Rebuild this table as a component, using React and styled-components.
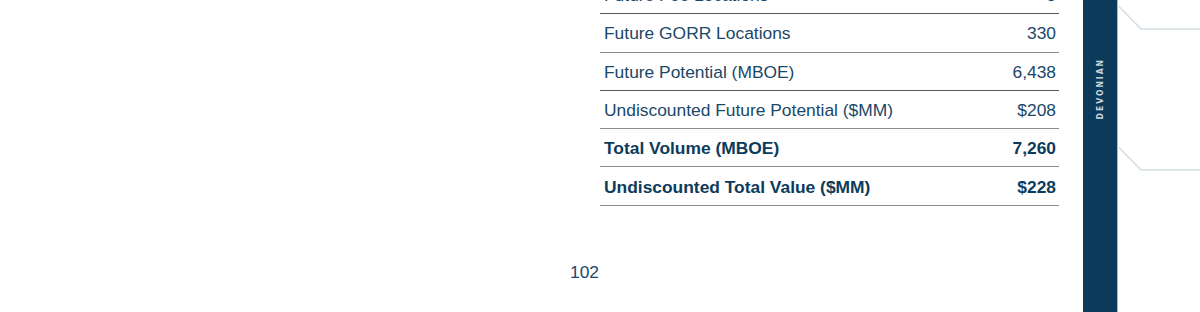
import React from "react";
import styled, { createGlobalStyle } from "styled-components";

const Global = createGlobalStyle`
  html, body { margin: 0; padding: 0; background: #ffffff; }
  body { font-family: "Liberation Sans", Arial, sans-serif; }
`;

const Page = styled.div`
  width: 1200px;
  height: 312px;
  display: flex;
  overflow: hidden;
  background: #ffffff;
`;

const Main = styled.div`
  flex: none;
  width: 1083px;
  box-sizing: border-box;
  display: flex;
  flex-direction: column;
  align-items: flex-start;
  padding-left: 570px;
`;

const Table = styled.div`
  width: 459px;
  margin-top: -24px;
  margin-left: 30px;
  display: flex;
  flex-direction: column;
`;

const Row = styled.div`
  box-sizing: border-box;
  height: 38.3px;
  display: flex;
  align-items: center;
  justify-content: space-between;
  white-space: nowrap;
  padding: 2px 3px 0 4px;
  border-bottom: 1px solid ${(p) => (p.$dark ? "#555a5e" : "#8c8f92")};
  font-size: 17.4px;
  font-weight: ${(p) => (p.$bold ? 700 : 400)};
  color: ${(p) => (p.$bold ? "#0c3b5b" : "#1a4868")};
`;

const PageNumber = styled.div`
  margin-top: 56px;
  font-size: 17.4px;
  color: #1a4868;
`;

const Sidebar = styled.div`
  width: 35px;
  flex: none;
  background: #0c3a5a;
  border-right: 1px solid #a9bccb;
  display: flex;
  justify-content: center;
  align-items: flex-start;
  padding-top: 58px;
  padding-left: 1px;
  box-sizing: border-box;
`;

const SideLabel = styled.div`
  writing-mode: vertical-rl;
  transform: rotate(180deg);
  font-family: "DejaVu Sans Condensed", "DejaVu Sans", sans-serif;
  font-weight: 700;
  font-size: 8.5px;
  letter-spacing: 2px;
  line-height: 1;
  color: #c9d6e0;
`;

const Decor = styled.div`
  flex: 1;
  height: 312px;
`;

const rows = [
  { label: "Future Fee Locations", value: "0", dark: true },
  { label: "Future GORR Locations", value: "330" },
  { label: "Future Potential (MBOE)", value: "6,438", dark: true },
  { label: "Undiscounted Future Potential ($MM)", value: "$208" },
  { label: "Total Volume (MBOE)", value: "7,260", bold: true },
  { label: "Undiscounted Total Value ($MM)", value: "$228", bold: true },
];

export default function App() {
  return (
    <>
      <Global />
      <Page>
        <Main>
          <Table>
            {rows.map((r) => (
              <Row key={r.label} $bold={r.bold} $dark={r.dark}>
                <span>{r.label}</span>
                <span>{r.value}</span>
              </Row>
            ))}
          </Table>
          <PageNumber>102</PageNumber>
        </Main>
        <Sidebar>
          <SideLabel>DEVONIAN</SideLabel>
        </Sidebar>
        <Decor>
          <svg width="82" height="312" viewBox="0 0 82 312">
            <polyline
              points="1,6.5 23,29 82,29"
              fill="none"
              stroke="#d3dee4"
              strokeWidth="1.6"
            />
            <polyline
              points="1,147.5 23,170 82,170"
              fill="none"
              stroke="#d3dee4"
              strokeWidth="1.6"
            />
          </svg>
        </Decor>
      </Page>
    </>
  );
}
